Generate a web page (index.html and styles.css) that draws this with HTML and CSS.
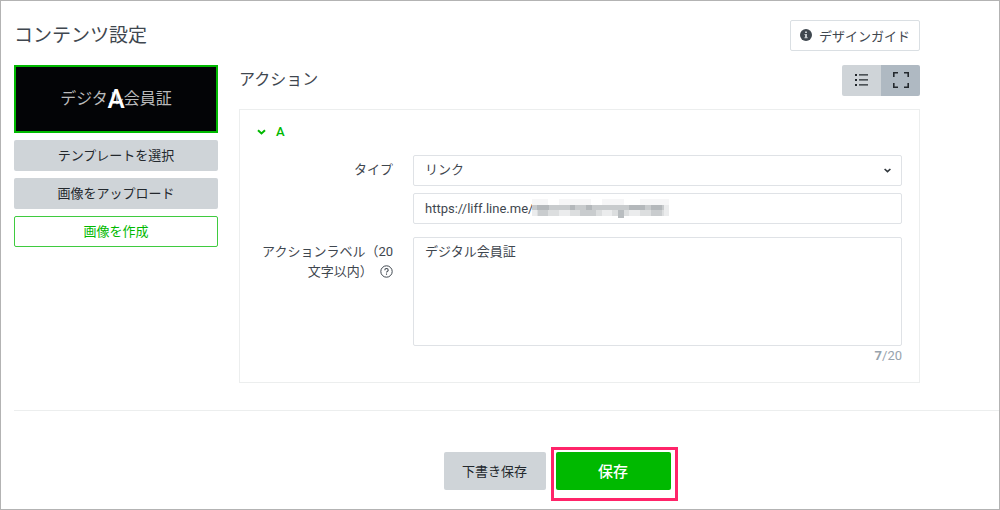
FILE: index.html
```html
<!DOCTYPE html>
<html lang="ja">
<head>
    <meta charset="UTF-8">
    <meta name="viewport" content="width=device-width, initial-scale=1.0">
    <title>コンテンツ設定</title>
    <link rel="stylesheet" href="styles.css">
</head>
<body>
    <div class="page">
        <div class="content">
            <header class="page-header">
                <h1>コンテンツ設定</h1>
                <button type="button" class="btn guide-btn">
                    <svg width="12" height="12" viewBox="0 0 12 12">
                        <circle cx="6" cy="6" r="6" fill="#3f474f"/>
                        <path d="M5 2.5h2v1.5H5zM4.5 5H7v3.2h.7v1H4.4v-1H5V6h-.5z" fill="#c3c8cc"/>
                    </svg>
                    デザインガイド
                </button>
            </header>

            <div class="columns">
                <!-- Left column: image preview and image buttons -->
                <aside class="sidebar">
                    <div class="preview">デジタル会員証<span class="area-mark">A</span></div>
                    <button type="button" class="btn btn-gray">テンプレートを選択</button>
                    <button type="button" class="btn btn-gray">画像をアップロード</button>
                    <button type="button" class="btn btn-outline">画像を作成</button>
                </aside>

                <!-- Right column: action settings -->
                <main class="main">
                    <div class="main-header">
                        <h2>アクション</h2>
                        <div class="view-switch">
                            <button type="button" class="view-btn" aria-label="リスト表示">
                                <svg width="14" height="14" viewBox="0 0 14 14" fill="#23282d">
                                    <path d="M0 1h2v2H0zM0 6h2v2H0zM0 11h2v2H0zM4 1.2h9v1.3H4zM4 6.2h9v1.3H4zM4 11.2h9v1.3H4z"/>
                                </svg>
                            </button>
                            <button type="button" class="view-btn active" aria-label="全体表示">
                                <svg width="16" height="16" viewBox="0 0 16 16" fill="none" stroke="#23282d" stroke-width="1.6">
                                    <path d="M.8 5V.8H5M11 .8h4.2V5M15.2 11v4.2H11M5 15.2H.8V11"/>
                                </svg>
                            </button>
                        </div>
                    </div>

                    <form class="panel">
                        <button type="button" class="panel-toggle">
                            <svg width="9" height="6" viewBox="0 0 9 6" fill="none" stroke="#00b900" stroke-width="2">
                                <path d="M1 1.2l3.5 3.2L8 1.2"/>
                            </svg>
                            A
                        </button>

                        <div class="row">
                            <label class="row-label" for="actionType">タイプ</label>
                            <div class="row-body">
                                <div class="select-box">
                                    <select id="actionType" class="field">
                                        <option>リンク</option>
                                    </select>
                                    <svg class="select-arrow" width="7" height="5" viewBox="0 0 7 5" fill="none" stroke="#30363c" stroke-width="1.6">
                                        <path d="M.6 1L3.5 3.7 6.4 1"/>
                                    </svg>
                                </div>
                                <div class="url-box">
                                    <input type="text" id="actionUrl" class="field" aria-label="URL" value="https://liff.line.me/">
                                    <svg class="mosaic" width="137" height="20" viewBox="0 0 137 20" shape-rendering="crispEdges">
                                        <path fill="#f6f6f7" d="M0 0h16v6H0zM27 0h32v6H27zM70 0h22v6H70zM108 0h29v6h-29z"/>
                                        <path fill="#dcdedf" d="M0 6h132v11H0z"/>
                                        <path fill="#c8cbcd" d="M0 6h132v5H0z"/>
                                        <path fill="#b4b8bb" d="M5 6h12v5H5zM38 6h5v5h-5zM54 6h6v5h-6zM97 6h16v5H97zM119 6h11v5h-11z"/>
                                        <path fill="#c9ccce" d="M6 11h10v6H6zM48 11h16v6H48zM119 11h11v6h-11z"/>
                                        <path fill="#b9bdc0" d="M86 11h6v8h-6z"/>
                                        <path fill="#ebeced" d="M0 11h5v6H0zM27 11h11v6H27zM70 11h10v6H70zM97 11h11v6H97zM132 6h5v11h-5z"/>
                                    </svg>
                                </div>
                            </div>
                        </div>

                        <div class="row">
                            <label class="row-label" for="actionLabel">アクションラベル（20<br>文字以内）
                                <svg class="help" width="13" height="13" viewBox="0 0 13 13" fill="none" stroke="#3f474f">
                                    <circle cx="6.5" cy="6.5" r="5.7"/>
                                    <path d="M4.8 5.2c0-2.2 3.4-2.2 3.4 0 0 1.1-1.7 1.2-1.7 2.4M6.5 8.6v1.2" stroke-width="1.1"/>
                                </svg>
                            </label>
                            <div class="row-body">
                                <textarea id="actionLabel" class="field">デジタル会員証</textarea>
                                <div class="counter"><b>7</b>/20</div>
                            </div>
                        </div>
                    </form>
                </main>
            </div>
        </div>

        <footer class="footer">
            <button type="button" class="btn btn-gray draft-btn">下書き保存</button>
            <div class="highlight">
                <button type="button" class="btn save-btn">保存</button>
            </div>
        </footer>
    </div>
</body>
</html>
```
FILE: styles.css
```css
* {
    box-sizing: border-box;
}
body {
    font-family: Roboto, "Noto Sans CJK JP", sans-serif;
    font-size: 13px;
    line-height: 20px;
    color: #3f474f;
    background-color: #fff;
    margin: 0;
}
h1, h2 {
    font-weight: 400;
    margin: 0;
}
h1 {
    font-size: 19px;
    line-height: 31px;
}
h2 {
    font-size: 16px;
    line-height: 30px;
}
button, input, select, textarea {
    font-family: inherit;
    font-size: 13px;
    color: inherit;
}
svg {
    display: block;
}
.page {
    min-height: 100vh;
    padding: 19px 0 8px 13px;
    border: 1px solid #b3b3b3;
}
.content {
    margin-right: 79px;
}
.page-header, .main-header {
    display: flex;
    justify-content: space-between;
}
.columns {
    display: flex;
    gap: 21px;
    margin-top: 14px;
}
.btn {
    display: flex;
    align-items: center;
    justify-content: center;
    height: 31px;
    padding: 0 0 2px;
    border: none;
    border-radius: 2px;
    cursor: pointer;
}
.btn-gray {
    background-color: #cfd4d8;
    color: #23282d;
}
.btn-outline {
    background-color: #fff;
    border: 1px solid #3fcb3f;
    color: #00b900;
}
.guide-btn {
    gap: 7px;
    padding: 0 9px 1px;
    background-color: #fff;
    border: 1px solid #dadfe3;
}
.sidebar {
    display: flex;
    flex-direction: column;
    gap: 7px;
    width: 204px;
}
.preview {
    position: relative;
    display: flex;
    align-items: center;
    justify-content: center;
    height: 68px;
    background-color: #030406;
    border: 2px solid #00b900;
    color: #b9babb;
    font-size: 16px;
}
.area-mark {
    position: absolute;
    color: #fff;
    font-size: 26px;
    font-weight: 500;
}
.main {
    flex: 1;
}
.view-switch {
    display: flex;
    border-radius: 2px;
    overflow: hidden;
}
.view-btn {
    display: flex;
    align-items: center;
    justify-content: center;
    width: 39px;
    height: 31px;
    padding: 0 0 2px;
    border: none;
    background-color: #cfd4d8;
    cursor: pointer;
}
.view-btn.active {
    background-color: #afb9c2;
}
.panel {
    margin-top: 13px;
    padding: 12px 17px 16px;
    border: 1px solid #eceeee;
}
.panel-toggle {
    display: flex;
    align-items: center;
    gap: 10px;
    padding: 0;
    border: none;
    background: none;
    color: #00b900;
    font-weight: 500;
    line-height: 20px;
}
.row {
    display: flex;
    gap: 20px;
    margin-top: 13px;
}
.row-label {
    width: 136px;
    padding-top: 5px;
    text-align: right;
}
.row-body {
    flex: 1;
}
.field {
    display: block;
    width: 100%;
    height: 31px;
    padding: 0 11px 1px;
    border: 1px solid #dfe2e6;
    border-radius: 2px;
    background-color: #fff;
    line-height: 20px;
}
.select-box, .url-box {
    position: relative;
}
select.field {
    appearance: none;
}
.select-arrow {
    position: absolute;
    right: 11px;
    top: 13px;
}
.url-box {
    margin-top: 7px;
}
.mosaic {
    position: absolute;
    left: 119px;
    top: 6px;
}
textarea.field {
    height: 109px;
    padding-top: 4px;
    resize: none;
}
.help {
    display: inline-block;
    vertical-align: -2px;
    margin-left: 4px;
}
.counter {
    text-align: right;
    color: #98a3ad;
}
.footer {
    display: flex;
    justify-content: center;
    align-items: flex-start;
    gap: 5px;
    margin-top: 27px;
    padding: 36px 0 0 108px;
    border-top: 1px solid #eceeee;
}
.draft-btn {
    width: 102px;
    height: 38px;
    margin-top: 5px;
}
.highlight {
    padding: 2px 4px 8px 2px;
    border: 3px solid #ff2469;
}
.save-btn {
    width: 115px;
    height: 38px;
    background-color: #00b900;
    color: #fff;
    font-size: 15px;
    font-weight: 500;
}
```
